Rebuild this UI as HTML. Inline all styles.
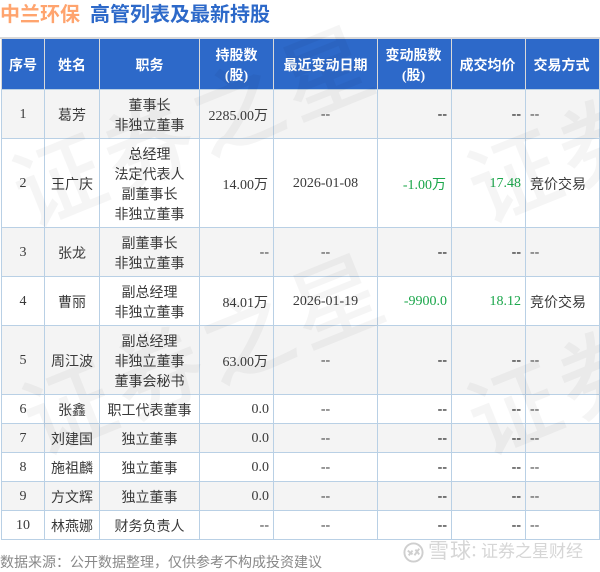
<!DOCTYPE html>
<html lang="zh"><head><meta charset="utf-8">
<style>
html,body{margin:0;padding:0;background:#fff}
body{width:600px;height:570px;position:relative;overflow:hidden;font-family:"Liberation Serif","WenQuanYi Zen Hei","Noto Sans CJK SC",serif;font-size:14px;color:#3a3a3a}
.title{position:absolute;top:2px;font-size:20px;font-weight:bold;line-height:26px;white-space:nowrap;font-family:"Liberation Sans","WenQuanYi Zen Hei","Noto Sans CJK SC",sans-serif}
.band{position:absolute;left:0;top:37px;width:600px;height:2px;background:#d9d9d9}
table{position:absolute;left:1px;top:38px;border-collapse:collapse;table-layout:fixed;width:598px}
th{background:#2d69c9;color:#fff;font-weight:bold;border:1px solid #d9d9d9;border-bottom:1px solid #b9d0e5;height:50px;padding:6px 4px 0;line-height:20px;box-sizing:border-box;text-align:center}
th.s{padding-left:3px;padding-right:5px}
td{border:1px solid #b9d0e5;padding:7px 5px 1px;line-height:20px;box-sizing:border-box;text-align:center}
td.n{padding-top:5px;padding-bottom:3px}
td.n.r{padding-right:4px}
td.l{padding-left:4px}
tr.g td{background:#f4f4f4}
.r{text-align:right}.l{text-align:left}
.k{color:#000}.up{color:#1aa64a}
.wm{position:absolute;font-size:90px;line-height:90px;font-weight:500;color:rgba(0,0,0,.04);letter-spacing:6px;white-space:nowrap;transform:rotate(-22deg);transform-origin:0 50%;font-family:"Noto Sans CJK SC",sans-serif}
.foot{position:absolute;left:0;top:552px;line-height:20px;font-size:14px;color:#888;white-space:nowrap;font-family:"Liberation Sans","WenQuanYi Zen Hei","Noto Sans CJK SC",sans-serif}
.logo{position:absolute;white-space:nowrap;color:#d6d6d6;font-family:"Liberation Sans","WenQuanYi Zen Hei","Noto Sans CJK SC",sans-serif}
</style></head><body>
<div class="title" style="left:0;color:#ffa46e">中兰环保</div>
<div class="title" style="left:90px;color:#2d69c9">高管列表及最新持股</div>
<div class="band"></div>
<table>
<colgroup><col style="width:43px"><col style="width:55px"><col style="width:100px"><col style="width:74px"><col style="width:104px"><col style="width:74px"><col style="width:74px"><col style="width:74px"></colgroup>
<tr style="height:51px"><th>序号</th><th>姓名</th><th>职务</th><th>持股数<br>(股)</th><th>最近变动日期</th><th class="s">变动股数<br>(股)</th><th class="s">成交均价</th><th class="s">交易方式</th></tr>
<tr class="g" style="height:49px"><td class="n">1</td><td>葛芳</td><td>董事长<br>非独立董事</td><td class="r">2285.00万</td><td class="n">--</td><td class="n r k">--</td><td class="n r k">--</td><td class="n l">--</td></tr>
<tr style="height:89px"><td class="n">2</td><td>王广庆</td><td>总经理<br>法定代表人<br>副董事长<br>非独立董事</td><td class="r">14.00万</td><td class="n">2026-01-08</td><td class="r up">-1.00万</td><td class="n r up">17.48</td><td class="l">竞价交易</td></tr>
<tr class="g" style="height:49px"><td class="n">3</td><td>张龙</td><td>副董事长<br>非独立董事</td><td class="n r">--</td><td class="n">--</td><td class="n r k">--</td><td class="n r k">--</td><td class="n l">--</td></tr>
<tr style="height:49px"><td class="n">4</td><td>曹丽</td><td>副总经理<br>非独立董事</td><td class="r">84.01万</td><td class="n">2026-01-19</td><td class="n r up">-9900.0</td><td class="n r up">18.12</td><td class="l">竞价交易</td></tr>
<tr class="g" style="height:69px"><td class="n">5</td><td>周江波</td><td>副总经理<br>非独立董事<br>董事会秘书</td><td class="r">63.00万</td><td class="n">--</td><td class="n r k">--</td><td class="n r k">--</td><td class="n l">--</td></tr>
<tr style="height:29px"><td class="n">6</td><td>张鑫</td><td>职工代表董事</td><td class="n r">0.0</td><td class="n">--</td><td class="n r k">--</td><td class="n r k">--</td><td class="n l">--</td></tr>
<tr class="g" style="height:29px"><td class="n">7</td><td>刘建国</td><td>独立董事</td><td class="n r">0.0</td><td class="n">--</td><td class="n r k">--</td><td class="n r k">--</td><td class="n l">--</td></tr>
<tr style="height:29px"><td class="n">8</td><td>施祖麟</td><td>独立董事</td><td class="n r">0.0</td><td class="n">--</td><td class="n r k">--</td><td class="n r k">--</td><td class="n l">--</td></tr>
<tr class="g" style="height:29px"><td class="n">9</td><td>方文辉</td><td>独立董事</td><td class="n r">0.0</td><td class="n">--</td><td class="n r k">--</td><td class="n r k">--</td><td class="n l">--</td></tr>
<tr style="height:29px"><td class="n">10</td><td>林燕娜</td><td>财务负责人</td><td class="n r">--</td><td class="n">--</td><td class="n r k">--</td><td class="n r k">--</td><td class="n l">--</td></tr>
</table>
<div class="wm" style="left:15px;top:147px">证券之星</div>
<div class="wm" style="left:470px;top:143px">证券之星</div>
<div class="wm" style="left:25px;top:375px">证券之星</div>
<div class="wm" style="left:470px;top:375px">证券之星</div>
<div class="foot">数据来源：公开数据整理，仅供参考不构成投资建议</div>
<svg style="position:absolute;left:403px;top:542px" width="21" height="21" viewBox="0 0 22 22" fill="none" stroke="#cfcfcf" stroke-width="2"><circle cx="11" cy="11" r="9.5"/><path d="M5 9l5 4M10 9l-4 5M12 14l5-7M13 8l4 5"/></svg>
<div class="logo" style="left:428px;top:540px;font-size:21px;line-height:24px;letter-spacing:1px">雪球</div>
<div class="logo" style="left:470px;top:541px;font-size:16px;line-height:22px">：</div>
<div class="logo" style="left:481px;top:541px;font-size:17px;line-height:22px">证券之星财经</div>
</body></html>
